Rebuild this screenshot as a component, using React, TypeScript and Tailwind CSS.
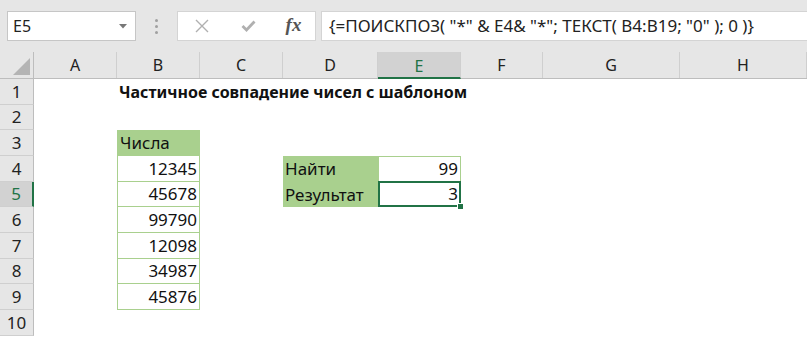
import React from 'react'

const font = { fontFamily: '"Noto Sans", "Open Sans", sans-serif' }

const cols = [
  { label: 'A', w: 'w-[83px]' },
  { label: 'B', w: 'w-[83px]' },
  { label: 'C', w: 'w-[83px]' },
  { label: 'D', w: 'w-[95px]' },
  { label: 'E', w: 'w-[83px]' },
  { label: 'F', w: 'w-[82px]' },
  { label: 'G', w: 'w-[137px]' },
  { label: 'H', w: 'w-[127px]' },
]

const rowHeights = [
  'h-[26px]',
  'h-[25px]',
  'h-[26px]',
  'h-[26px]',
  'h-[25px]',
  'h-[26px]',
  'h-[26px]',
  'h-[25px]',
  'h-[26px]',
  'h-[26px]',
]

type Cell = { text?: string; cls?: string; selected?: boolean; size?: string }

const green = 'bg-[#a9d08e]'
const box = 'border-l border-r border-b border-[#a9d08e]'
const nums = ['12345', '45678', '99790', '12098', '34987', '45876']

// row is 1-based, col is 0-based (A = 0)
function getCell(r: number, c: number): Cell | null {
  if (r === 1 && c === 1)
    return {
      text: 'Частичное совпадение чисел с шаблоном',
      size: 'text-[16px]',
      cls: 'font-bold overflow-visible whitespace-nowrap z-10',
    }
  if (r === 3 && c === 1) return { text: 'Числа', cls: `${green} border border-[#a9d08e]` }
  if (r >= 4 && r <= 9 && c === 1) return { text: nums[r - 4], cls: `${box} justify-end` }
  if (r === 4 && c === 3) return { text: 'Найти', cls: green }
  if (r === 5 && c === 3) return { text: 'Результат', cls: green }
  if (r === 4 && c === 4) return { text: '99', cls: 'border border-[#a9d08e] justify-end' }
  if (r === 5 && c === 4) return { text: '3', cls: `${box} justify-end`, selected: true }
  return null
}

function FormulaBar() {
  return (
    <div className="h-[52px] bg-[#e6e6e6] flex items-start pt-[11px] pl-[7px]">
      <div className="w-[129px] h-[30px] bg-white border border-[#c6c6c6] flex items-center pl-[5px] pr-[8px] justify-between text-[16px] text-[#222]">
        <span>E5</span>
        <svg width="8" height="5" viewBox="0 0 8 5">
          <path d="M0 0 L8 0 L4 4.5 Z" fill="#777" />
        </svg>
      </div>
      <div className="w-[41px] h-[30px] flex flex-col items-center justify-center gap-[3px]">
        <span className="w-[3px] h-[3px] rounded-full bg-[#a0a0a0]" />
        <span className="w-[3px] h-[3px] rounded-full bg-[#a0a0a0]" />
        <span className="w-[3px] h-[3px] rounded-full bg-[#a0a0a0]" />
      </div>
      <div className="w-[139px] h-[30px] bg-white border border-[#d4d4d4] flex items-center">
        <div className="w-[47px] flex justify-center pl-[1px]">
          <svg width="14" height="14" viewBox="0 0 14 14">
            <path d="M1 1 L13 13 M13 1 L1 13" stroke="#b0b0b0" strokeWidth="1.4" fill="none" />
          </svg>
        </div>
        <div className="w-[47px] flex justify-center">
          <svg width="15" height="12" viewBox="0 0 15 12">
            <path d="M1.5 6 L5.5 10 L13.5 1.5" stroke="#b0b0b0" strokeWidth="2.8" fill="none" />
          </svg>
        </div>
        <div
          className="flex-1 flex justify-center text-[19px] italic font-bold text-[#555] pb-[2px]"
          style={{ fontFamily: '"Liberation Serif", serif' }}
        >
          fx
        </div>
      </div>
      <div className="ml-[5px] flex-1 h-[30px] bg-white border border-[#d4d4d4] border-r-0 flex items-center pl-[7px] text-[17px] text-[#222] whitespace-nowrap">
        {'{=ПОИСКПОЗ( "*" & E4& "*"; ТЕКСТ( B4:B19; "0" ); 0 )}'}
      </div>
    </div>
  )
}

function ColumnHeader() {
  return (
    <div className="flex h-[27px] bg-[#e6e6e6] border-b border-[#bdbdbd]">
      <div className="w-[34px] relative border-r border-[#bdbdbd]">
        <svg className="absolute right-[3px] bottom-[3px]" width="17" height="17" viewBox="0 0 17 17">
          <path d="M17 0 L17 17 L0 17 Z" fill="#b4b4b4" />
        </svg>
      </div>
      {cols.map((c) => {
        const sel = c.label === 'E'
        return (
          <div
            key={c.label}
            className={`${c.w} shrink-0 flex items-center justify-center text-[16px] border-r border-[#cfcfcf] ${
              sel ? 'bg-[#d2d2d2] text-[#217346] border-b-2 border-b-[#217346] -mb-[1px] pt-[2px]' : 'text-[#222]'
            }`}
          >
            {c.label}
          </div>
        )
      })}
    </div>
  )
}

export default function App() {
  return (
    <div className="w-[807px] h-[338px] overflow-hidden bg-white select-none" style={font}>
      <FormulaBar />
      <ColumnHeader />
      {rowHeights.map((h, i) => {
        const r = i + 1
        const selRow = r === 5
        return (
          <div key={r} className={`flex ${h}`}>
            <div
              className={`w-[34px] shrink-0 flex items-center justify-center text-[17px] border-b border-[#cfcfcf] ${
                selRow
                  ? 'bg-[#d2d2d2] text-[#217346] border-r-2 border-r-[#217346]'
                  : 'bg-[#e6e6e6] text-[#222] border-r border-r-[#bdbdbd]'
              }`}
            >
              {r}
            </div>
            {cols.map((c, ci) => {
              const cell = getCell(r, ci)
              return (
                <div
                  key={c.label}
                  className={`${c.w} shrink-0 relative flex items-center px-[2px] text-[#111] ${
                    cell?.size ?? 'text-[17px]'
                  } ${cell?.cls ?? ''}`}
                >
                  {cell?.text}
                  {cell?.selected && (
                    <>
                      <div className="absolute -left-[1px] -top-[1px] -right-[1px] -bottom-[1px] border-2 border-[#217346]" />
                      <div className="absolute -right-[4px] -bottom-[4px] w-[7px] h-[7px] bg-[#217346] border border-white" />
                    </>
                  )}
                </div>
              )
            })}
          </div>
        )
      })}
    </div>
  )
}
